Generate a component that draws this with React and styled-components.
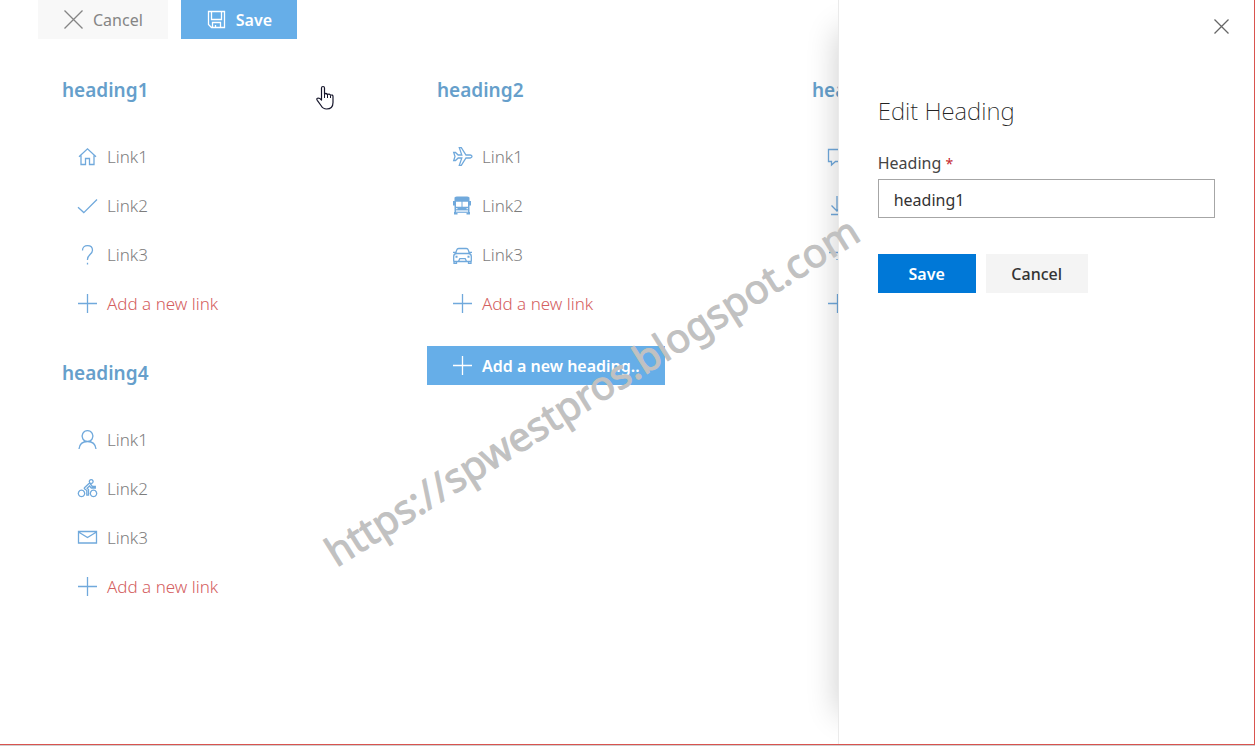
import React from 'react';
import styled, { createGlobalStyle } from 'styled-components';

const Global = createGlobalStyle`
  * { box-sizing: border-box; }
  body { margin: 0; background: #fff; font-family: "Noto Sans", "Open Sans", sans-serif; color: #333; }
  button, input { font-family: inherit; }
  h1, h2, ul { margin: 0; padding: 0; }
`;

const Page = styled.div`
  position: relative;
  height: 100vh;
  min-height: 640px;
  overflow: hidden;
  display: flex;
  flex-direction: column;
`;
const Frame = styled.div`
  flex: 1;
  min-height: 0;
  display: flex;
  border: solid #d9534f;
  border-width: 0 1px 1px 0;
`;
const Main = styled.main`
  flex: 1;
  min-width: 0;
  overflow: hidden;
`;
const Toolbar = styled.div`
  display: flex;
  gap: 13px;
  padding-left: 38px;
`;
const ToolButton = styled.button`
  display: flex;
  align-items: center;
  gap: 9px;
  height: 39px;
  padding: 0 25px;
  border: 0;
  font-size: 16px;
  line-height: 22px;
  white-space: nowrap;
  font-weight: ${p => (p.$primary ? 600 : 400)};
  color: ${p => (p.$primary ? '#fff' : '#858585')};
  background: ${p => (p.$primary ? '#66aee8' : '#f8f8f8')};
`;
const Grid = styled.div`
  display: grid;
  grid-template-columns: repeat(3, 1fr);
  width: calc(100vw - 130px);
  margin: 24px 0 0 52px;
`;
const Cell = styled.section`
  padding-bottom: 23px;
`;
const GroupTitle = styled.h2`
  padding: 0 10px;
  margin-bottom: 20px;
  font-size: 19px;
  line-height: 54px;
  font-weight: 600;
  color: #669fcb;
`;
const Links = styled.ul`
  list-style: none;
  display: flex;
  flex-direction: column;
  gap: 10px;
  padding-left: 25px;
`;
const LinkItem = styled.a`
  display: flex;
  align-items: center;
  gap: 9px;
  height: 39px;
  font-size: 17px;
  line-height: 22px;
  font-weight: 300;
  text-decoration: none;
  color: ${p => (p.$add ? '#d4605f' : '#7d7d7d')};
`;
const Icon = styled.svg`
  flex: none;
  width: 21px;
  height: 21px;
  fill: none;
  stroke: ${p => p.$color || '#70a9dc'};
  stroke-width: 1.3;
`;
const Panel = styled.aside`
  position: relative;
  flex: none;
  width: 33.2%;
  padding: 0 39px;
  border-left: 1px solid #eaeaea;
  background: #fff;
  box-shadow: -30px 0 30px -30px rgba(0, 0, 0, 0.2);
`;
const CloseRow = styled.div`
  display: flex;
  justify-content: flex-end;
  height: 94px;
  padding-top: 16px;
  margin-right: -17px;
`;
const CloseButton = styled.button`
  display: flex;
  height: 21px;
  padding: 0;
  border: 0;
  background: none;
`;
const PanelTitle = styled.h1`
  font-size: 24px;
  line-height: 34px;
  font-weight: 200;
  color: #222;
`;
const Label = styled.label`
  display: block;
  margin-top: 24px;
  font-size: 16px;
  line-height: 22px;
  color: #444;
`;
const Required = styled.span`
  font-size: 14px;
  line-height: 1;
  color: #c4262e;
`;
const TextBox = styled.input`
  display: block;
  width: 100%;
  height: 39px;
  margin-top: 5px;
  padding: 2px 15px 0;
  border: 1px solid #a6a6a6;
  font-size: 16px;
  color: #333;
  outline: 0;
`;
const Actions = styled.div`
  display: flex;
  gap: 10px;
  margin-top: 36px;
`;
const ActionButton = styled.button`
  height: 39px;
  min-width: ${p => (p.$primary ? '98px' : '102px')};
  padding: 0 20px;
  border: 0;
  font-size: 16px;
  font-weight: ${p => (p.$primary ? 600 : 500)};
  color: ${p => (p.$primary ? '#fff' : '#333')};
  background: ${p => (p.$primary ? '#0078d7' : '#f4f4f4')};
`;
const Watermark = styled.div`
  position: absolute;
  left: 336px;
  top: 525px;
  font-size: 40px;
  line-height: 56px;
  white-space: nowrap;
  color: #c1c1c1;
  -webkit-text-stroke: 1px #c1c1c1;
  transform: rotate(-32deg);
  transform-origin: 0 42px;
  pointer-events: none;
`;
const Pointer = styled.svg`
  position: absolute;
  left: 315px;
  top: 85px;
  width: 20px;
  height: 26px;
`;
const Below = styled.div`
  flex: none;
  height: 1px;
  background: #cfcfcf;
`;

const paths = {
  cancel: <path d="M1.500 1.500l18 18M19.500 1.500l-18 18" />,
  close: <path d="M3.500 3.500l14 14M17.500 3.500l-14 14" />,
  save: <path d="M2.500 2.500h16v16h-13l-3-3zM5.500 2.500v8h10v-8M6.500 18.500v-5h8v5M9.500 18.500v-2.500" />,
  home: <path d="M2 10.800L10.500 2.800l8.500 8M4 9.500v9h4.500v-6h4v6H17v-9" />,
  check: <path d="M1 12.200l5.800 5.400L20 4.500" />,
  question: <path d="M5.500 6.500c0-3 2-4.800 5-4.800s5 1.800 5 4.500c0 4-5 4.800-5 9v.800M10.500 18.800v1.600" />,
  plus: <path d="M10.500 1v19M1 10.500h19" />,
  plane: <path d="M1.700 6.500h1.800l2.700 2.500h3.600L7.300 1.600h2L14 9h4.200c2.400.500 2.400 2.500 0 3H14l-4.700 7.400h-2L9.800 12H6.200l-2.700 2.500H1.700L3 10.500z" />,
  bus: (
    <>
      <path fill="#70a9dc" stroke="none" fillRule="evenodd" d="M2.500 2.500q1-1 2.500-1h10q1.500 0 2.500 1v3.500H19v4.500h-1.500V17h.5v2.500h-3.500V18h-9v1.500H2V17h.5v-6.500H1V6h1.500zM4 6.800v5h5.500v-5zM10.500 6.800v5H16v-5z" />
      <path stroke="#cfe2f4" d="M4 16.200h12" strokeWidth="2.200" />
      <path stroke="#fff" d="M4 13.700h1.500M14.500 13.700H16" strokeWidth="1" />
    </>
  ),
  car: (
    <>
      <path d="M3.500 9.500l1.300-3.700Q5.200 4.500 6.700 4.500h7.600q1.500 0 1.900 1.300l1.300 3.700M1.700 17.500v-5q0-3 3-3h11.600q3 0 3 3v5M1.700 17.500h17.600M2 17.500v1.800h2.500v-1.800M16.500 17.500v1.800H19v-1.800M1 8.300h2.600M17.400 8.300H20M6.500 17.200l1.300-2.500h5.400l1.300 2.500" />
      <path fill="#70a9dc" stroke="none" d="M3.500 11.800h2v2h-2zM15.500 11.800h2v2h-2z" />
    </>
  ),
  person: <path d="M2 20c.5-4.800 3.800-7.500 8.500-7.500S18.500 15.200 19 20M10.500 1.700a5.400 5.400 0 1 0 .01 0z" />,
  bike: <path d="M4.500 12.200a3.200 3.200 0 1 0 .01 0zM16.500 12.200a3.200 3.200 0 1 0 .01 0zM14.200 1.600a1.900 1.900 0 1 0 .01 0zM12 5.500L7.500 9.700q-.6.800.3 1.400l2 1.500v4.500h1.700v-5.500l-1.400-1.300 2.400-2.300 1.800 2h4V8.500h-3L13.500 6q-.8-1-1.500-.5z" />,
  mail: <path d="M1.500 4.500h18v11.500h-18zM1.500 5l9 5.500 9-5.500" />,
  comment: <path d="M1.500 3.500h18v12h-11l-4 3.500v-3.500h-3z" />,
  download: <path d="M10 1v15M4.500 10.500l5.500 5.500 5.500-5.500M4 19.500h12" />,
  tray: <path d="M2 8.500h16M10 15v1" />,
};

const Glyph = ({ name, color }) => (
  <Icon viewBox="0 0 21 21" $color={color} aria-hidden="true">{paths[name]}</Icon>
);

const groups = [
  { title: 'heading1', icons: ['home', 'check', 'question'] },
  { title: 'heading2', icons: ['plane', 'bus', 'car'] },
  { title: 'heading3', icons: ['comment', 'download', 'tray'] },
  { title: 'heading4', icons: ['person', 'bike', 'mail'] },
];

const Group = ({ title, icons }) => (
  <Cell>
    <GroupTitle>{title}</GroupTitle>
    <Links>
      {icons.map((icon, i) => (
        <li key={icon}><LinkItem href="#"><Glyph name={icon} />Link{i + 1}</LinkItem></li>
      ))}
      <li><LinkItem href="#" $add><Glyph name="plus" />Add a new link</LinkItem></li>
    </Links>
  </Cell>
);

export default function App() {
  return (
    <Page>
      <Global />
      <Frame>
        <Main>
          <Toolbar>
            <ToolButton type="button"><Glyph name="cancel" color="#858585" />Cancel</ToolButton>
            <ToolButton type="button" $primary><Glyph name="save" color="#fff" />Save</ToolButton>
          </Toolbar>
          <Grid>
            {groups.map(g => <Group key={g.title} {...g} />)}
            <Cell>
              <ToolButton type="button" $primary><Glyph name="plus" color="#fff" />Add a new heading..</ToolButton>
            </Cell>
          </Grid>
        </Main>
        <Panel>
          <CloseRow>
            <CloseButton type="button" aria-label="Close"><Glyph name="close" color="#666" /></CloseButton>
          </CloseRow>
          <PanelTitle>Edit Heading</PanelTitle>
          <Label htmlFor="heading">Heading <Required>*</Required></Label>
          <TextBox id="heading" type="text" defaultValue="heading1" />
          <Actions>
            <ActionButton type="button" $primary>Save</ActionButton>
            <ActionButton type="button">Cancel</ActionButton>
          </Actions>
        </Panel>
      </Frame>
      <Below />
      <Watermark>https://spwestpros.blogspot.com</Watermark>
      <Pointer viewBox="0 0 20 26" aria-hidden="true">
        <path fill="#fff" stroke="#15152a" strokeWidth="1.2" strokeLinejoin="round" d="M6.500 15V3q0-1.500 1.500-1.500T9.500 3v6q1.500-1.200 3 .5 1.700-1.200 3 .7 2.500-.8 2.500 1.300v6q0 6.500-6.500 6.500-3.500 0-5.500-3.500l-3.700-5.200q-1.300-2 .8-2.300 1.700 0 3.400 2z" />
        <path fill="none" stroke="#15152a" d="M9.500 8v5M12.500 9.500V13M15.500 10.500V13" />
      </Pointer>
    </Page>
  );
}
